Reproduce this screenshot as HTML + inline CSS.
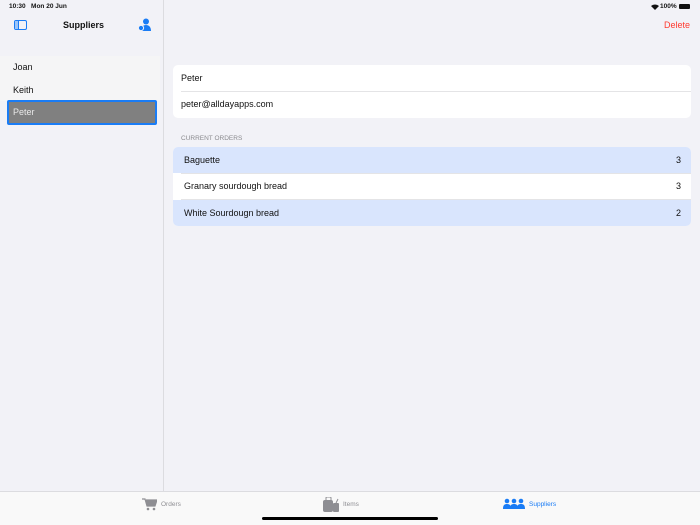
<!DOCTYPE html>
<html><head><style>
*{margin:0;padding:0;box-sizing:border-box}
body{width:700px;height:525px;background:#f2f2f7;font-family:"Liberation Sans",sans-serif;position:relative;overflow:hidden;color:#111}
.abs{position:absolute}
.side{left:0;top:0;width:164px;height:491px;border-right:1px solid #dcdce0;background:#f2f2f7}
.row{font-size:9px}
.card{background:#fff;border-radius:5px;left:173px;width:518px}
.tab{left:0;top:491px;width:700px;height:34px;background:#f9f9f9;border-top:1px solid #dcdce0}
</style></head><body>
<div class="abs side"></div>
<div class="abs" style="left:9px;top:3px;font-size:6.5px;font-weight:bold">10:30&nbsp;&nbsp;&nbsp;Mon 20 Jun</div>
<div class="abs" style="left:14px;top:20px;width:13px;height:10px;border:1.5px solid #1a7cf5;border-radius:2px"><div style="width:4px;height:100%;background:#9cc5f8;border-right:1px solid #1a7cf5"></div></div>
<div class="abs" style="left:63px;top:20px;font-size:9px;font-weight:bold">Suppliers</div>
<svg class="abs" style="left:137px;top:18px" width="16" height="14" viewBox="0 0 16 14"><circle cx="9" cy="3.5" r="3" fill="#1a7cf5"/><path d="M4 13c0-4 2-6 5-6s5 2 5 6z" fill="#1a7cf5"/><circle cx="4" cy="10" r="2.6" fill="#1a7cf5" stroke="#f2f2f7" stroke-width="1"/></svg>
<div class="abs" style="left:0;top:56px;width:160px;height:45px;background:#f5f5f6"></div>
<div class="abs row" style="left:13px;top:62px">Joan</div>
<div class="abs row" style="left:13px;top:85px">Keith</div>
<div class="abs" style="left:7px;top:100px;width:150px;height:25px;background:#808080;border:2px solid #1a7cf5;border-radius:2px"></div>
<div class="abs row" style="left:13px;top:107px;color:#e8e8e8">Peter</div>
<div class="abs" style="left:660px;top:3px;font-size:6.5px;font-weight:bold">100%</div>
<svg class="abs" style="left:651px;top:4px" width="8" height="6" viewBox="0 0 8 6"><path d="M0 2a6 6 0 0 1 8 0L4 6z" fill="#111"/></svg>
<div class="abs" style="left:679px;top:4px;width:11px;height:5px;background:#111;border-radius:1px"></div>
<div class="abs" style="left:664px;top:20px;font-size:9px;color:#ff3b30">Delete</div>
<div class="abs card" style="top:65px;height:53px"></div>
<div class="abs" style="left:181px;top:91px;width:510px;height:1px;background:#e4e4e6"></div>
<div class="abs row" style="left:181px;top:73px">Peter</div>
<div class="abs row" style="left:181px;top:99px">peter@alldayapps.com</div>
<div class="abs" style="left:181px;top:135px;font-size:6.5px;color:#8a8a8e">CURRENT ORDERS</div>
<div class="abs card" style="top:147px;height:79px;overflow:hidden">
<div style="height:26px;background:#d9e5fd"></div><div style="height:1px;background:#e4e4e6;margin-left:8px"></div><div style="height:25px;background:#fff"></div><div style="height:1px;background:#e4e4e6;margin-left:8px"></div><div style="height:26px;background:#d9e5fd"></div></div>
<div class="abs row" style="left:184px;top:155px">Baguette</div><div class="abs row" style="left:676px;top:155px">3</div>
<div class="abs row" style="left:184px;top:181px">Granary sourdough bread</div><div class="abs row" style="left:676px;top:181px">3</div>
<div class="abs row" style="left:184px;top:208px">White Sourdougn bread</div><div class="abs row" style="left:676px;top:208px">2</div>
<div class="abs tab"></div>
<svg class="abs" style="left:142px;top:498px" width="15" height="13" viewBox="0 0 15 13"><path d="M0 1h3l2 7h8l2-6H4" fill="#8e8e93" stroke="#8e8e93" stroke-width="1.2"/><circle cx="6" cy="11" r="1.3" fill="#8e8e93"/><circle cx="12" cy="11" r="1.3" fill="#8e8e93"/></svg>
<div class="abs" style="left:161px;top:501px;font-size:6.5px;color:#8e8e93">Orders</div>
<svg class="abs" style="left:323px;top:497px" width="17" height="15" viewBox="0 0 17 15"><rect x="0" y="3" width="10" height="12" rx="2" fill="#8e8e93"/><rect x="3" y="0" width="5" height="4" rx="1" fill="none" stroke="#8e8e93"/><rect x="10" y="6" width="6" height="9" rx="1" fill="#8e8e93"/><path d="M13 6l2-4" stroke="#8e8e93"/></svg>
<div class="abs" style="left:343px;top:501px;font-size:6.5px;color:#8e8e93">Items</div>
<svg class="abs" style="left:503px;top:498px" width="22" height="12" viewBox="0 0 22 12"><circle cx="4" cy="3" r="2.3" fill="#1a7cf5"/><circle cx="11" cy="3" r="2.3" fill="#1a7cf5"/><circle cx="18" cy="3" r="2.3" fill="#1a7cf5"/><path d="M0 11c0-4 1.5-5 4-5s4 1 4 5zM7 11c0-4 1.5-5 4-5s4 1 4 5zM14 11c0-4 1.5-5 4-5s4 1 4 5z" fill="#1a7cf5"/></svg>
<div class="abs" style="left:529px;top:501px;font-size:6.5px;color:#1a7cf5">Suppliers</div>
<div class="abs" style="left:262px;top:517px;width:176px;height:3px;background:#000;border-radius:2px"></div>
</body></html>
